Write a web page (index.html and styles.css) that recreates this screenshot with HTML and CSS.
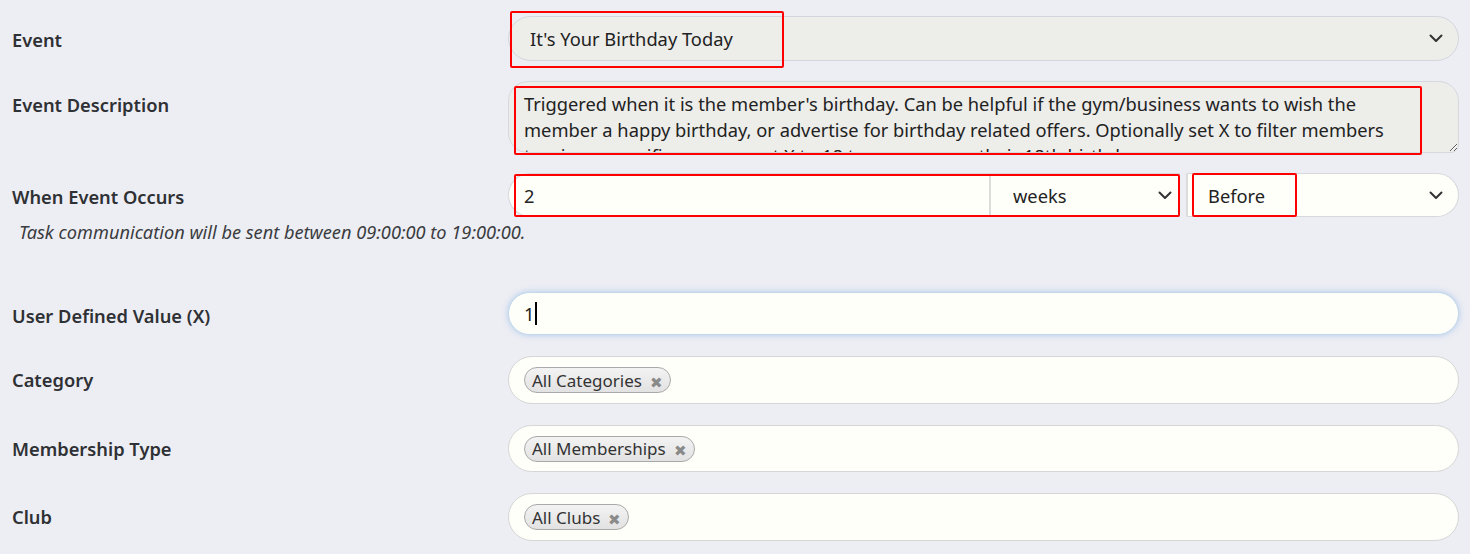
FILE: index.html
```html
<!DOCTYPE html>
<html lang="en">
<head>
<meta charset="utf-8">
<title>Task Event</title>
<link rel="stylesheet" href="styles.css">
</head>
<body>
<form class="form">
  <div class="row">
    <label class="label">Event</label>
    <div class="control">
      <div class="pill select disabled h45">
        <span class="value">It's Your Birthday Today</span>
        <svg class="chevron" width="14" height="9" viewBox="0 0 14 9"><polyline points="1.5,1.5 7,7 12.5,1.5" fill="none" stroke="#333" stroke-width="2" stroke-linecap="round" stroke-linejoin="round"/></svg>
      </div>
      <span class="mark mark-event"></span>
    </div>
  </div>

  <div class="row">
    <label class="label">Event Description</label>
    <div class="control">
      <textarea class="textarea" readonly>Triggered when it is the member's birthday. Can be helpful if the gym/business wants to wish the member a happy birthday, or advertise for birthday related offers. Optionally set X to filter members turning a specific age, e.g. set X to 18 to message on their 18th birthday.</textarea>
      <span class="mark mark-desc"></span>
    </div>
  </div>

  <div class="row row-when">
    <label class="label">When Event Occurs</label>
    <div class="control">
      <div class="group">
        <div class="group-input"><span class="value">2</span></div>
        <div class="group-select">
          <span class="value">weeks</span>
          <svg class="chevron" width="14" height="9" viewBox="0 0 14 9"><polyline points="1.5,1.5 7,7 12.5,1.5" fill="none" stroke="#333" stroke-width="2" stroke-linecap="round" stroke-linejoin="round"/></svg>
        </div>
        <div class="group-before">
          <span class="value">Before</span>
          <svg class="chevron" width="14" height="9" viewBox="0 0 14 9"><polyline points="1.5,1.5 7,7 12.5,1.5" fill="none" stroke="#333" stroke-width="2" stroke-linecap="round" stroke-linejoin="round"/></svg>
        </div>
      </div>
      <span class="mark mark-amount"></span>
      <span class="mark mark-before"></span>
    </div>
  </div>
  <p class="note">Task communication will be sent between 09:00:00 to 19:00:00.</p>

  <div class="row row-udv">
    <label class="label">User Defined Value (X)</label>
    <div class="control">
      <div class="pill input focused h43">
        <span class="value">1</span><span class="caret"></span>
      </div>
    </div>
  </div>

  <div class="row row-multi">
    <label class="label">Category</label>
    <div class="control">
      <div class="pill input h48">
        <span class="tag">All Categories <span class="tag-x">&#x2716;</span></span>
      </div>
    </div>
  </div>

  <div class="row row-multi">
    <label class="label">Membership Type</label>
    <div class="control">
      <div class="pill input h47">
        <span class="tag">All Memberships <span class="tag-x">&#x2716;</span></span>
      </div>
    </div>
  </div>

  <div class="row row-multi">
    <label class="label">Club</label>
    <div class="control">
      <div class="pill input h48">
        <span class="tag">All Clubs <span class="tag-x">&#x2716;</span></span>
      </div>
    </div>
  </div>
</form>
</body>
</html>
```

FILE: styles.css
```css
* { box-sizing: border-box; }

html, body {
  margin: 0;
  background: #edeef4;
}

body {
  font-family: "Noto Sans", "Open Sans", "Liberation Sans", sans-serif;
  color: #222;
  overflow: hidden;
}

.form {
  padding: 16px 11px 0 12px;
  width: 1470px;
}

.row {
  display: grid;
  grid-template-columns: 496px 1fr;
  margin-bottom: 20px;
}

.row-udv,
.row-multi { margin-bottom: 21px; }

.row-when { margin-bottom: 0; }

.label {
  align-self: start;
  padding-top: 12px;
  line-height: 24px;
  font-size: 18.3px;
  font-weight: 600;
  color: #2f3134;
}

.control {
  position: relative;
}

.pill {
  display: flex;
  align-items: center;
  border: 1px solid #d3d6dd;
  border-radius: 24px;
  padding: 0 15px 0 21px;
  font-size: 18.3px;
}

.h45 { height: 45px; }
.h43 { height: 43px; }
.h48 { height: 48px; }
.h47 { height: 47px; }

.select.disabled {
  background: #ededea;
  justify-content: space-between;
}

.input {
  background: #fffffa;
  padding-left: 15px;
  border-color: #d6d6d6;
}

.input.focused {
  border-color: #c4d7ec;
  box-shadow: 0 0 6px rgba(120, 170, 225, 0.55);
}

.value {
  color: #222;
  white-space: nowrap;
}

.chevron { flex: none; display: block; }

.caret {
  display: inline-block;
  width: 2px;
  height: 23px;
  background: #000;
  margin-left: 1px;
}

.textarea {
  display: block;
  width: 100%;
  height: 72px;
  margin: 0;
  border: 1px solid #d6d8dd;
  border-radius: 20px 20px 8px 20px;
  background: #ededea;
  padding: 9px 36px 0 15px;
  font-family: "Noto Sans", "Open Sans", "Liberation Sans", sans-serif;
  font-size: 18.3px;
  line-height: 26px;
  color: #222;
  resize: vertical;
  overflow: hidden;
  outline: none;
}

.group {
  display: flex;
  height: 44px;
  font-size: 18.3px;
}

.group-input {
  flex: 0 0 481px;
  display: flex;
  align-items: center;
  background: #fffffa;
  border: 1px solid #d6d8dd;
  border-right: none;
  border-radius: 22px 0 0 22px;
  padding-left: 15px;
}

.group-select {
  flex: 0 0 191px;
  display: flex;
  align-items: center;
  justify-content: space-between;
  background: #fffffa;
  border: 1px solid #d6d8dd;
  border-left: 2px solid #dcdcdc;
  padding: 0 7px 0 22px;
}

.group-before {
  flex: 1;
  display: flex;
  align-items: center;
  justify-content: space-between;
  background: #fffffa;
  border: 1px solid #d6d8dd;
  border-left: 2px solid #dcdcdc;
  margin-left: 6px;
  border-radius: 0 22px 22px 0;
  padding: 0 15px 0 20px;
}

.note {
  margin: 5px 0 50px 7px;
  font-style: italic;
  font-size: 18.2px;
  line-height: 20px;
  color: #3a3c40;
}

.tag {
  display: inline-flex;
  align-items: center;
  height: 26px;
  padding: 0 7px 0 7px;
  border: 1px solid #a9a9a9;
  border-radius: 13px;
  background: linear-gradient(#f3f3f3, #e2e2e2);
  font-size: 17px;
  color: #333;
  white-space: nowrap;
}

.tag-x {
  margin-left: 8px;
  font-size: 15px;
  color: #8a8a8a;
  line-height: 1;
  position: relative;
  top: 2px;
}

.mark {
  position: absolute;
  border: 2px solid #ff0000;
  border-radius: 2px;
  pointer-events: none;
}

.mark-event  { left: 2px;   top: -5px; width: 274px; height: 57px; }
.mark-desc   { left: 6px;   top: 5px;  width: 908px; height: 69px; }
.mark-amount { left: 6px;   top: 1px;  width: 666px; height: 43px; }
.mark-before { left: 684px; top: 0;    width: 105px; height: 44px; }
```
